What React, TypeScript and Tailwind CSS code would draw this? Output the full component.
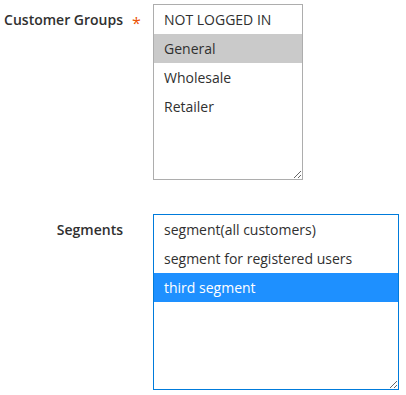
import React from 'react';

interface Option {
  label: string;
  selected?: 'gray' | 'blue';
}

const groups: Option[] = [
  { label: 'NOT LOGGED IN' },
  { label: 'General', selected: 'gray' },
  { label: 'Wholesale' },
  { label: 'Retailer' },
];

const segments: Option[] = [
  { label: 'segment(all customers)' },
  { label: 'segment for registered users' },
  { label: 'third segment', selected: 'blue' },
];

function MultiSelect({ options, width, focused }: { options: Option[]; width: string; focused?: boolean }) {
  return (
    <div
      className={`${width} h-[176px] resize overflow-auto bg-white border ${
        focused ? 'border-[#007bdb]' : 'border-[#adadad]'
      }`}
    >
      {options.map((o) => (
        <div
          key={o.label}
          className={`h-[29px] leading-[29px] px-[10px] whitespace-nowrap ${
            o.selected === 'gray'
              ? 'bg-[#cacaca] text-[#303030]'
              : o.selected === 'blue'
              ? 'bg-[#1e90ff] text-white'
              : 'text-[#303030]'
          }`}
        >
          {o.label}
        </div>
      ))}
    </div>
  );
}

export default function App() {
  return (
    <div className="w-[406px] h-[395px] bg-white pt-[4px] text-[14px] font-['Open_Sans',sans-serif]">
      <div className="flex">
        <div className="w-[153px] pr-[30px] pt-[1px] text-right leading-[29px] font-semibold text-[#303030]">
          <span className="relative">
            Customer Groups
            <span className="absolute left-[calc(100%+9px)] top-[-1px] text-[16px] text-[#eb5202] font-normal">*</span>
          </span>
        </div>
        <MultiSelect options={groups} width="w-[150px]" />
      </div>

      <div className="flex mt-[34px]">
        <div className="w-[153px] pr-[30px] pt-[1px] text-right leading-[29px] font-semibold text-[#303030]">
          Segments
        </div>
        <MultiSelect options={segments} width="w-[246px]" focused />
      </div>
    </div>
  );
}
